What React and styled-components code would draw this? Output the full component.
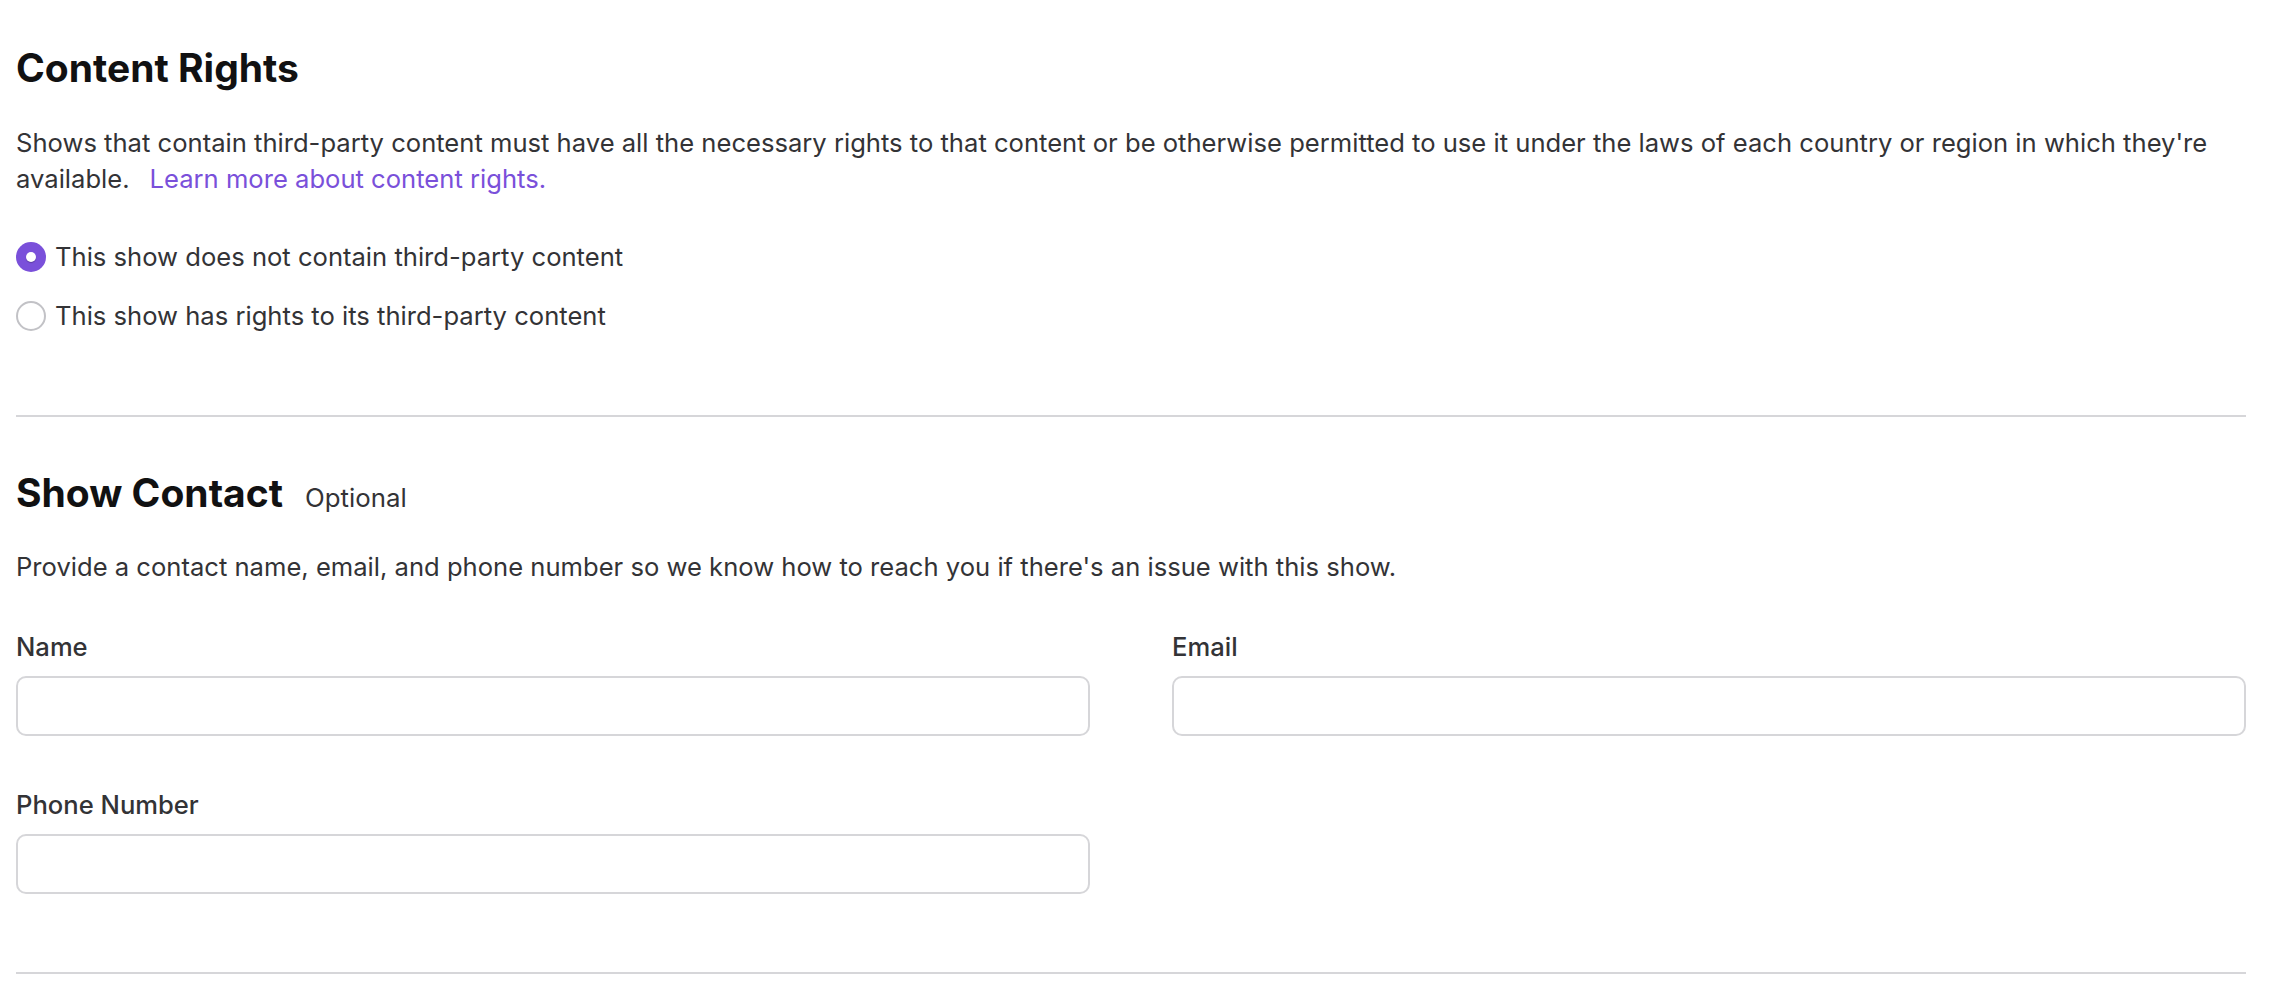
import React, {useState} from "react";
import styled, {createGlobalStyle} from "styled-components";

const GlobalStyle = createGlobalStyle`
  html, body {
    margin: 0;
    padding: 0;
    background: #ffffff;
  }
  body {
    font-family: Inter, "Noto Sans", "Liberation Sans", sans-serif;
    color: #333336;
    -webkit-font-smoothing: antialiased;
  }
  * {
    box-sizing: border-box;
  }
`;

const Page = styled.div`
  padding: 45px 50px 0 16px;
  width: 2296px;
`;

const Section = styled.section`
  padding-bottom: ${(p) => p.$bottom || 0}px;
  border-bottom: 2px solid #d6d6d9;
  margin-bottom: ${(p) => p.$after || 0}px;
`;

const TitleRow = styled.div`
  display: flex;
  align-items: baseline;
  gap: 22px;
`;

const Title = styled.h2`
  margin: 0;
  font-size: 39px;
  line-height: 46px;
  font-weight: 700;
  color: #111112;
`;

const Optional = styled.span`
  font-size: 25.8px;
  color: #333336;
`;

const Text = styled.p`
  margin: ${(p) => p.$top || 0}px 0 0;
  font-size: 25.6px;
  line-height: 36px;
  color: #333336;
`;

const Link = styled.a`
  display: inline-block;
  color: #7a50da;
  text-decoration: none;
  margin-left: 20px;
  cursor: pointer;
`;

const RadioGroup = styled.div`
  display: flex;
  flex-direction: column;
  gap: 29px;
  margin-top: 45px;
`;

const RadioRow = styled.label`
  display: flex;
  align-items: center;
  gap: 9px;
  font-size: 25.6px;
  line-height: 30px;
  color: #333336;
  cursor: pointer;
`;

const RadioDot = styled.span`
  width: 30px;
  height: 30px;
  border-radius: 50%;
  flex: none;
  background: ${(p) => (p.$on ? "#7a50da" : "#ffffff")};
  border: ${(p) => (p.$on ? "none" : "2px solid #c2c2c6")};
  display: flex;
  align-items: center;
  justify-content: center;

  &::after {
    content: "";
    width: 10px;
    height: 10px;
    border-radius: 50%;
    background: #ffffff;
    box-shadow: 0 1px 1px rgba(0, 0, 0, 0.25);
    display: ${(p) => (p.$on ? "block" : "none")};
  }
`;

const FieldGrid = styled.div`
  display: grid;
  grid-template-columns: 1fr 1fr;
  column-gap: 82px;
  row-gap: 54px;
  margin-top: 47px;
`;

const Field = styled.div`
  display: flex;
  flex-direction: column;
  gap: 14px;
`;

const Label = styled.label`
  font-size: 25.6px;
  line-height: 30px;
  font-weight: 500;
  color: #333336;
`;

const Input = styled.input`
  height: 60px;
  width: 100%;
  border: 2px solid #d6d6d9;
  border-radius: 10px;
  padding: 0 14px;
  font: inherit;
  font-size: 25px;
  color: #1d1d1f;
  outline: none;
  background: #fff;

  &:focus {
    border-color: #7a50da;
  }
`;

const options = [
  {id: "none", label: "This show does not contain third-party content"},
  {id: "rights", label: "This show has rights to its third-party content"},
];

export default function App() {
  const [choice, setChoice] = useState("none");
  const [contact, setContact] = useState({name: "", email: "", phone: ""});

  const update = (key) => (e) =>
    setContact((prev) => ({...prev, [key]: e.target.value}));

  return (
    <>
      <GlobalStyle />
      <Page>
        <Section $bottom={84} $after={53}>
          <Title>Content Rights</Title>
          <Text $top={34}>
            Shows that contain third-party content must have all the necessary
            rights to that content or be otherwise permitted to use it under the
            laws of each country or region in which they're available.
            <Link>Learn more about content rights.</Link>
          </Text>
          <RadioGroup>
            {options.map((o) => (
              <RadioRow key={o.id} onClick={() => setChoice(o.id)}>
                <RadioDot $on={choice === o.id} />
                {o.label}
              </RadioRow>
            ))}
          </RadioGroup>
        </Section>

        <Section $bottom={78}>
          <TitleRow>
            <Title>Show Contact</Title>
            <Optional>Optional</Optional>
          </TitleRow>
          <Text $top={33}>
            Provide a contact name, email, and phone number so we know how to
            reach you if there's an issue with this show.
          </Text>
          <FieldGrid>
            <Field>
              <Label>Name</Label>
              <Input value={contact.name} onChange={update("name")} />
            </Field>
            <Field>
              <Label>Email</Label>
              <Input value={contact.email} onChange={update("email")} />
            </Field>
            <Field>
              <Label>Phone Number</Label>
              <Input value={contact.phone} onChange={update("phone")} />
            </Field>
          </FieldGrid>
        </Section>
      </Page>
    </>
  );
}
